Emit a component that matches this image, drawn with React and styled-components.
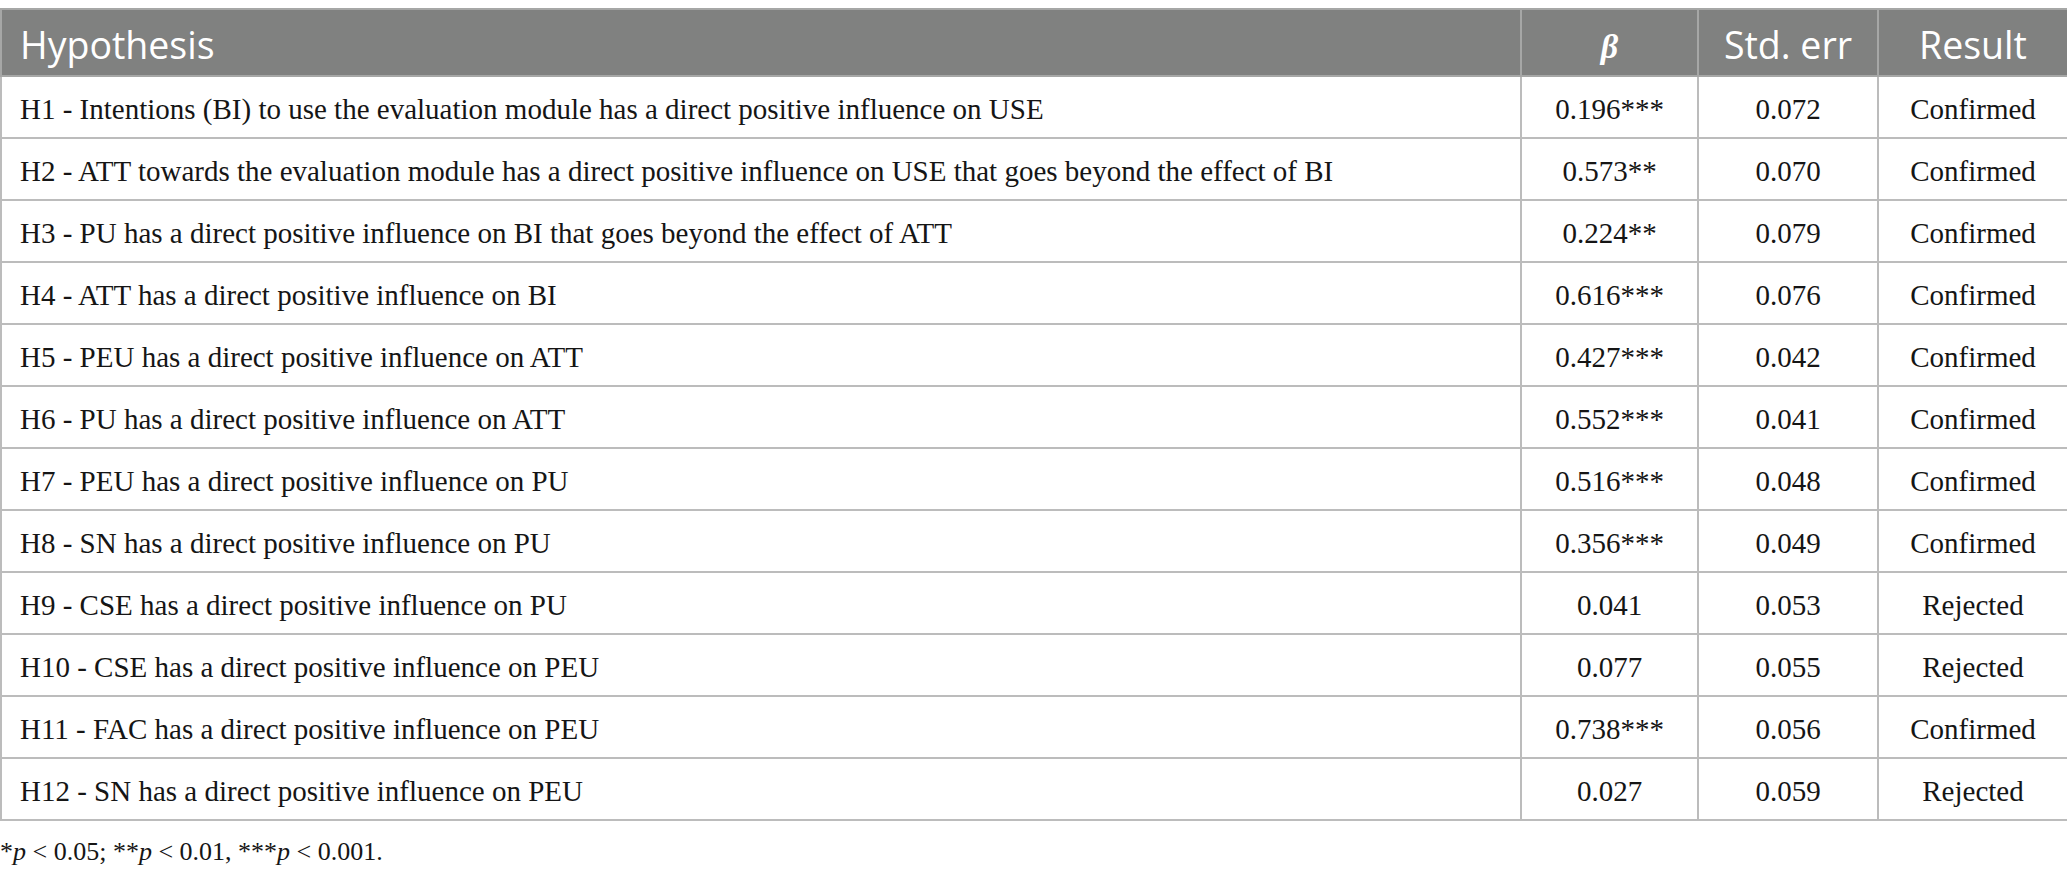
import React from "react";
import styled, { createGlobalStyle } from "styled-components";

const GlobalStyle = createGlobalStyle`
  html, body { margin: 0; padding: 0; background: #ffffff; }
  body { font-family: "Liberation Serif", "Times New Roman", serif; color: #1a1a1a; }
`;

const Page = styled.div`
  padding-top: 8px;
  width: 2067px;
`;

const Table = styled.table`
  width: 2067px;
  border-collapse: collapse;
  table-layout: fixed;
`;

const HeadCell = styled.th`
  background: #808180;
  color: #ffffff;
  font-family: "Open Sans", "Noto Sans", sans-serif;
  font-weight: 400;
  font-size: 37.5px;
  height: 67px;
  padding: 4px ${(p) => (p.$left ? "18px" : "0")} 0;
  text-align: ${(p) => (p.$left ? "left" : "center")};
  border: 2px solid #a6a7a6;
  box-sizing: border-box;
  line-height: 1;
`;

const Beta = styled.span`
  font-family: "Liberation Serif", "Times New Roman", serif;
  font-style: italic;
  font-weight: 700;
  font-size: 34px;
`;

const Cell = styled.td`
  font-family: "Liberation Serif", "Times New Roman", serif;
  font-size: 29px;
  color: #151515;
  height: 56px;
  padding: 4px ${(p) => (p.$left ? "18px" : "0")} 0;
  text-align: ${(p) => (p.$left ? "left" : "center")};
  border: 2px solid #bcbcbc;
  line-height: 1;
  white-space: nowrap;
`;

const Note = styled.p`
  margin: 16px 0 0 0;
  font-family: "Liberation Serif", "Times New Roman", serif;
  font-size: 26px;
  color: #151515;
  line-height: 30px;
`;

const P = styled.i`
  font-style: italic;
`;

const rows = [
  ["H1 - Intentions (BI) to use the evaluation module has a direct positive influence on USE", "0.196***", "0.072", "Confirmed"],
  ["H2 - ATT towards the evaluation module has a direct positive influence on USE that goes beyond the effect of BI", "0.573**", "0.070", "Confirmed"],
  ["H3 - PU has a direct positive influence on BI that goes beyond the effect of ATT", "0.224**", "0.079", "Confirmed"],
  ["H4 - ATT has a direct positive influence on BI", "0.616***", "0.076", "Confirmed"],
  ["H5 - PEU has a direct positive influence on ATT", "0.427***", "0.042", "Confirmed"],
  ["H6 - PU has a direct positive influence on ATT", "0.552***", "0.041", "Confirmed"],
  ["H7 - PEU has a direct positive influence on PU", "0.516***", "0.048", "Confirmed"],
  ["H8 - SN has a direct positive influence on PU", "0.356***", "0.049", "Confirmed"],
  ["H9 - CSE has a direct positive influence on PU", "0.041", "0.053", "Rejected"],
  ["H10 - CSE has a direct positive influence on PEU", "0.077", "0.055", "Rejected"],
  ["H11 - FAC has a direct positive influence on PEU", "0.738***", "0.056", "Confirmed"],
  ["H12 - SN has a direct positive influence on PEU", "0.027", "0.059", "Rejected"],
];

export default function App() {
  return (
    <Page>
      <GlobalStyle />
      <Table>
        <colgroup>
          <col style={{ width: "1520px" }} />
          <col style={{ width: "177px" }} />
          <col style={{ width: "180px" }} />
          <col style={{ width: "190px" }} />
        </colgroup>
        <thead>
          <tr>
            <HeadCell $left>Hypothesis</HeadCell>
            <HeadCell><Beta>β</Beta></HeadCell>
            <HeadCell>Std. err</HeadCell>
            <HeadCell>Result</HeadCell>
          </tr>
        </thead>
        <tbody>
          {rows.map((r) => (
            <tr key={r[0]}>
              <Cell $left>{r[0]}</Cell>
              <Cell>{r[1]}</Cell>
              <Cell>{r[2]}</Cell>
              <Cell>{r[3]}</Cell>
            </tr>
          ))}
        </tbody>
      </Table>
      <Note>
        *<P>p</P> &lt; 0.05; **<P>p</P> &lt; 0.01, ***<P>p</P> &lt; 0.001.
      </Note>
    </Page>
  );
}
